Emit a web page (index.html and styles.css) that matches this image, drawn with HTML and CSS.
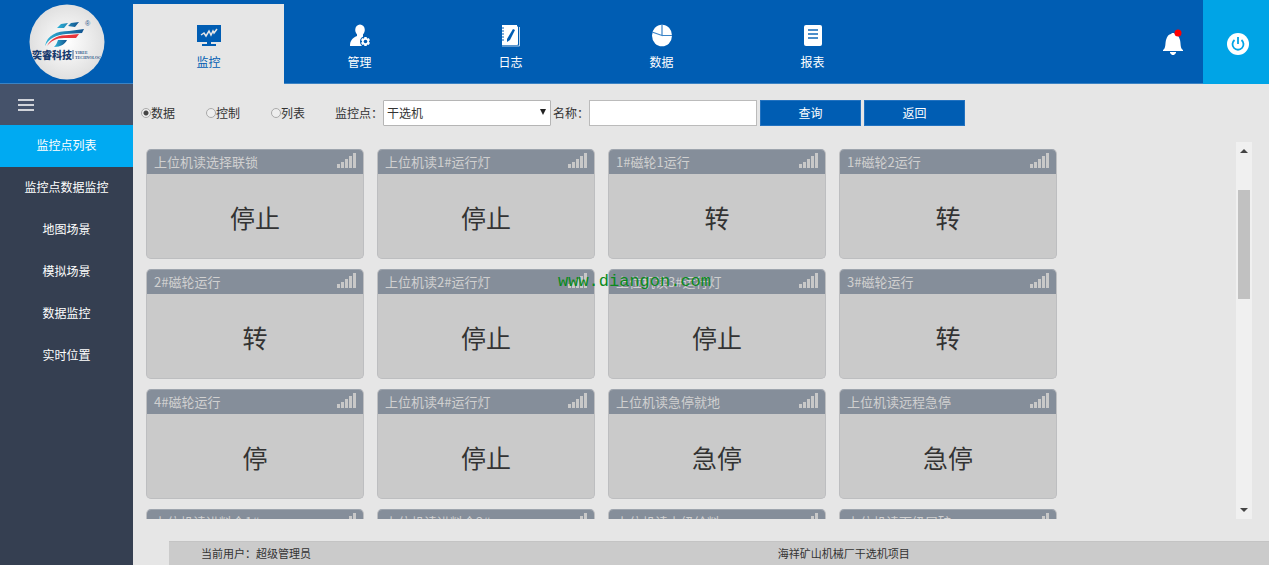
FILE: index.html
```html
<!DOCTYPE html>
<html lang="zh-CN">
<head>
<meta charset="utf-8">
<title>监控点列表</title>
<link rel="stylesheet" href="styles.css">
</head>
<body>
<svg class="defs" width="0" height="0" aria-hidden="true">
  <symbol id="signal" viewBox="0 0 19 15">
    <path d="M0 11h3v4H0zM4 9h3v6H4zM8 6h3v9H8zM12 3h3v12h-3zM16 0h3v15h-3z"/>
  </symbol>
</svg>
<div class="app">
  <header class="header">
    <div class="brand">
      <svg class="logo" viewBox="0 0 76 76" role="img" aria-label="奕睿科技">
        <defs>
          <radialGradient id="disc"><stop offset="0" stop-color="#fff"/><stop offset="1" stop-color="#e0e0e0"/></radialGradient>
          <linearGradient id="sky"><stop offset="0" stop-color="#2fb4d8"/><stop offset="1" stop-color="#12538f"/></linearGradient>
          <clipPath id="round"><circle cx="38" cy="38" r="37"/></clipPath>
        </defs>
        <circle cx="38" cy="38" r="37.500" fill="url(#disc)"/>
        <g clip-path="url(#round)">
          <path d="M28 24l4-4 7-1-4 5zM39 22l3-3 8-1-4 5z" fill="url(#sky)"/>
          <path d="M16 42c2-11 12-15 24-15l15-2-2 4-16 1c-10 1-17 4-21 12z" fill="url(#sky)"/>
          <path d="M18 42c4-8 12-11 22-11l10-1-3 4-12 0c-8 0-13 3-17 8z" fill="#e8353b"/>
          <path d="M29 36h9c-2 4-6 7-13 7 2-2 3-4 4-7z" fill="url(#sky)"/>
          <text class="logo-mark" x="56" y="22">®</text>
          <text class="logo-name" x="3" y="55">奕睿科技</text>
          <path d="M44 46v9" stroke="#315a8c"/>
          <text class="logo-sub" x="46" y="50">YIREE</text>
          <text class="logo-sub" x="46" y="55">TECHNOLOGY</text>
        </g>
      </svg>
    </div>
    <nav class="tabs" aria-label="主导航">
      <a class="tab active" href="#"><svg class="tab-icon" viewBox="0 0 24 24"><path fill="currentColor" d="M0 1h24v17H0zM10 18h4v2h5v2H5v-2h5z"/><path d="M4 11l3-2 2 3 3-5 2 4 2-4 1 2 3-4" fill="none" stroke="#e6e6e6" stroke-width="1.500"/></svg><span>监控</span></a>
      <a class="tab" href="#"><svg class="tab-icon" viewBox="0 0 24 24"><g fill="currentColor"><ellipse cx="12" cy="6" rx="4.800" ry="5.500"/><path d="M9 10h6v3l-1 9H2c0-5 2-8 7-10z"/></g><circle cx="17.500" cy="17.500" r="5.500" fill="#005db3"/><path d="M17.500 13v9M13.600 15.200l7.800 4.600M13.600 19.800l7.800-4.600" stroke="currentColor" stroke-width="2.500"/><circle cx="17.500" cy="17.500" r="3.500" fill="currentColor"/><circle cx="17.500" cy="17.500" r="1.800" fill="#005db3"/></svg><span>管理</span></a>
      <a class="tab" href="#"><svg class="tab-icon" viewBox="0 0 24 24"><path d="M3 1h15v19H3z" fill="currentColor"/><path d="M3 22h17.500V3" fill="none" stroke="#b9d3eb"/><path d="M18.500 2.500v18H3" fill="none" stroke="currentColor"/><path d="M2 4h3M2 7h3M2 10h3M2 13h3M2 16h3" stroke="#005db3"/><path d="M14 5l2 1-5 10-3 2v-3z" fill="#005db3"/></svg><span>日志</span></a>
      <a class="tab" href="#"><svg class="tab-icon" viewBox="0 0 24 24"><ellipse cx="12" cy="11.500" rx="10" ry="10.800" fill="currentColor"/><path d="M12 0v11.500L2 8M12 11.500h10" fill="none" stroke="#3a83c7" stroke-width="1.200"/></svg><span>数据</span></a>
      <a class="tab" href="#"><svg class="tab-icon" viewBox="0 0 24 24"><rect x="3" y="1" width="18" height="21" rx="2" fill="currentColor"/><path d="M7 6h10M7 10h10M7 14h10" stroke="#1269b9" stroke-width="1.300"/></svg><span>报表</span></a>
    </nav>
    <button class="bell" type="button" aria-label="消息"><svg width="20" height="26" viewBox="0 0 20 26"><path d="M0 21c3-2 2-6 3-10 1-4 3-6 5-6l1-1h2l1 1c2 0 4 2 5 6s0 8 3 10v1H0zM7 23h6v1l-2 2H9l-2-2z" fill="#fff"/><circle cx="15" cy="4" r="3.500" fill="#f00"/></svg></button>
    <button class="power" type="button" aria-label="退出"><svg width="24" height="24" viewBox="0 0 24 24"><circle cx="12" cy="12" r="11" fill="#fff"/><path d="M8.500 8a5.500 5.500 0 1 0 7 0M12 5v7" fill="none" stroke="#00a4e6" stroke-width="1.800"/></svg></button>
  </header>
  <div class="body">
    <aside class="sidebar">
      <button class="menu-toggle" type="button" aria-label="菜单"><svg width="16" height="14" viewBox="0 0 16 14"><path d="M0 2h16M0 7h16M0 12h16" stroke="#fff" stroke-width="1.500"/></svg></button>
      <nav class="menu" aria-label="侧边导航">
        <a class="current" href="#">监控点列表</a>
        <a href="#">监控点数据监控</a>
        <a href="#">地图场景</a>
        <a href="#">模拟场景</a>
        <a href="#">数据监控</a>
        <a href="#">实时位置</a>
      </nav>
    </aside>
    <main class="main">
      <form class="filter">
        <div class="modes">
          <label><input type="radio" name="mode" checked>数据</label>
          <label><input type="radio" name="mode">控制</label>
          <label><input type="radio" name="mode">列表</label>
        </div>
        <label for="point">监控点<span class="colon">：</span></label>
        <span class="select"><select id="point"><option>干选机</option></select></span>
        <label class="name-label" for="name">名称<span class="colon">：</span></label>
        <input class="field" id="name" type="text">
        <button class="btn" type="button">查询</button>
        <button class="btn" type="button">返回</button>
      </form>
      <div class="scroll">
        <div class="cards">
          <section class="card"><h2>上位机读选择联锁<svg><use href="#signal"/></svg></h2><p>停止</p></section>
          <section class="card"><h2>上位机读1#运行灯<svg><use href="#signal"/></svg></h2><p>停止</p></section>
          <section class="card"><h2>1#磁轮1运行<svg><use href="#signal"/></svg></h2><p>转</p></section>
          <section class="card"><h2>1#磁轮2运行<svg><use href="#signal"/></svg></h2><p>转</p></section>
          <section class="card"><h2>2#磁轮运行<svg><use href="#signal"/></svg></h2><p>转</p></section>
          <section class="card"><h2>上位机读2#运行灯<svg><use href="#signal"/></svg></h2><p>停止</p></section>
          <section class="card"><h2>上位机读3#运行灯<svg><use href="#signal"/></svg></h2><p>停止</p></section>
          <section class="card"><h2>3#磁轮运行<svg><use href="#signal"/></svg></h2><p>转</p></section>
          <section class="card"><h2>4#磁轮运行<svg><use href="#signal"/></svg></h2><p>停</p></section>
          <section class="card"><h2>上位机读4#运行灯<svg><use href="#signal"/></svg></h2><p>停止</p></section>
          <section class="card"><h2>上位机读急停就地<svg><use href="#signal"/></svg></h2><p>急停</p></section>
          <section class="card"><h2>上位机读远程急停<svg><use href="#signal"/></svg></h2><p>急停</p></section>
          <section class="card"><h2>上位机读进料仓1#<svg><use href="#signal"/></svg></h2></section>
          <section class="card"><h2>上位机读进料仓2#<svg><use href="#signal"/></svg></h2></section>
          <section class="card"><h2>上位机读上级给料<svg><use href="#signal"/></svg></h2></section>
          <section class="card"><h2>上位机读下级尾矿<svg><use href="#signal"/></svg></h2></section>
        </div>
        <div class="scrollbar" aria-hidden="true">
          <i class="arrow up"></i>
          <div class="track"><div class="thumb"></div></div>
          <i class="arrow down"></i>
        </div>
      </div>
      <footer class="footer"><span>当前用户<span class="colon">：</span>超级管理员</span><span>海祥矿山机械厂干选机项目</span></footer>
    </main>
  </div>
  <div class="watermark">www.diangon.com</div>
</div>
</body>
</html>
```
FILE: styles.css
```css
* { box-sizing: border-box; }
body {
  margin: 0;
  background: #e6e6e6;
  color: #333;
  font: 12px/16px "Noto Sans CJK SC", sans-serif;
}
a { color: inherit; text-decoration: none; }
button, input, select { font: inherit; color: inherit; }
button { border: 0; padding: 0; background: none; }
.defs { position: absolute; }
.colon { font-family: "Noto Sans CJK TC", sans-serif; }
.app { position: relative; display: flex; flex-direction: column; height: 100vh; overflow: hidden; }

.header { display: flex; height: 84px; flex: none; background: #005db3; border-bottom: 1px solid #3b83c4; color: #fff; }
.brand { width: 133px; display: flex; justify-content: center; align-items: center; }
.logo { width: 76px; height: 76px; }
.logo-name { font: 900 10px "Noto Sans CJK SC", sans-serif; fill: #183a6d; }
.logo-sub { font: bold 4px "Liberation Serif", serif; fill: #315a8c; }
.logo-mark { font: 7px "Liberation Sans", sans-serif; fill: #315a8c; }
.tabs { display: flex; flex: 1; padding-top: 4px; }
.tab { width: 151px; margin-bottom: -1px; padding-top: 20px; display: flex; flex-direction: column; align-items: center; gap: 6px; }
.tab-icon { width: 24px; height: 24px; }
.tab.active { background: #e6e6e6; color: #005db3; }
.bell { width: 60px; display: flex; align-items: center; justify-content: center; }
.power { width: 66px; margin-bottom: -1px; padding: 4px 0 0 3px; display: flex; align-items: center; justify-content: center; background: #00a4e6; }

.body { display: flex; flex: 1; min-height: 0; }
.sidebar { width: 133px; background: #353f51; color: #fff; }
.menu-toggle { display: flex; align-items: center; width: 100%; height: 41px; padding-left: 18px; background: #45526a; }
.menu a { display: block; line-height: 40px; height: 42px; text-align: center; }
.menu .current { background: #00aaf2; }

.main { flex: 1; min-width: 0; display: flex; flex-direction: column; }
.filter { display: flex; align-items: center; padding: 16px 0 16px 8px; }
.modes { display: flex; gap: 31px; margin-right: 30px; }
.modes label { display: flex; align-items: center; width: 34px; white-space: nowrap; }
.modes input { appearance: none; flex: none; width: 10px; height: 10px; margin: 0; border: 1px solid #aaa; border-radius: 50%; background: #eee; }
.modes input:checked { background: radial-gradient(circle, #444 2px, #eee 3px); }
.select { position: relative; display: flex; }
.select::after { content: ""; position: absolute; right: 5px; top: 9px; border: 3px solid transparent; border-top: 6px solid #222; border-bottom: 0; }
.select select { appearance: none; width: 168px; height: 26px; padding: 0 3px; border: 1px solid #b5b5b5; border-radius: 1px; background: #fff; }
.name-label { margin-left: 2px; }
.field { width: 168px; height: 26px; margin-right: 3px; padding: 0 4px; border: 1px solid #bbb; background: #fff; }
.btn { width: 101px; height: 26px; margin-right: 3px; border: 1px solid #2272c0; background: #005db3; color: #fff; }

.scroll { flex: 1; min-height: 0; display: flex; margin: 0 17px 22px 13px; overflow: hidden; }
.cards { flex: 1; display: grid; grid-template-columns: repeat(auto-fill, 218px); grid-auto-rows: 110px; gap: 10px 13px; padding-top: 7px; }
.card { display: flex; flex-direction: column; background: #cacaca; border: 1px solid #bdbec0; border-top-color: #9ea5ae; border-radius: 5px; overflow: hidden; }
.card h2 { display: flex; justify-content: space-between; align-items: flex-start; margin: 0; padding: 0 7px; background: #858e9a; color: #d0d0d0; font-size: 13px; font-weight: 400; line-height: 24px; }
.card h2 svg { width: 19px; height: 15px; margin-top: 3px; fill: #c8c8c8; }
.card p { flex: 1; display: flex; align-items: center; justify-content: center; margin: 0; padding-top: 2px; font-size: 25px; line-height: 36px; }

.scrollbar { display: flex; flex-direction: column; align-items: center; width: 16px; background: #f0f0f0; }
.track { flex: 1; width: 12px; padding-top: 30px; }
.thumb { height: 109px; background: #c1c1c1; }
.arrow { margin: 7px 0; border: 4px solid transparent; }
.up { border-top: 0; border-bottom-color: #444; }
.down { border-bottom: 0; border-top-color: #444; }

.footer { display: grid; grid-template-columns: 54% 1fr; margin-left: 36px; padding-left: 32px; border-top: 1px solid #c4c4c4; background: #cbcbcb; font-size: 11px; line-height: 23px; }
.watermark { position: absolute; left: 558px; top: 272px; color: #0a8a1c; font: 17px/20px "Liberation Mono", monospace; }
```
